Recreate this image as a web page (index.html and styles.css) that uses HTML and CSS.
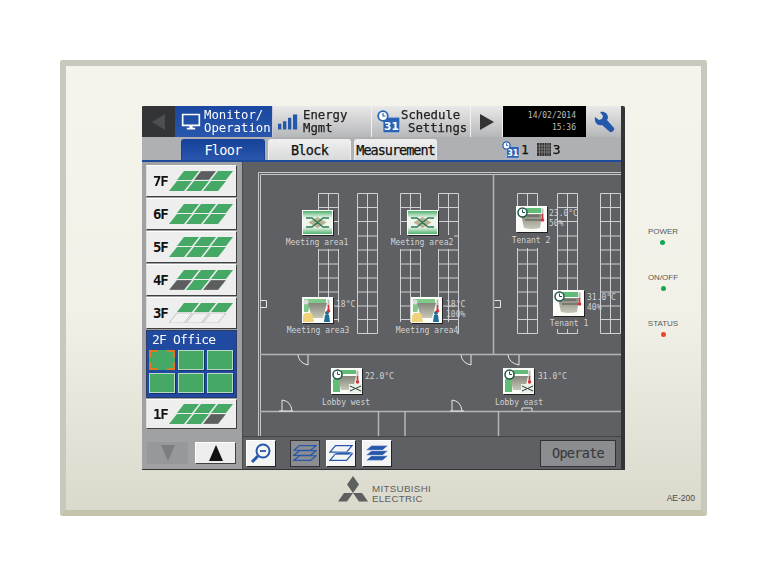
FILE: index.html
```html
<!DOCTYPE html>
<html lang="en">
<head>
<meta charset="utf-8">
<title>AE-200</title>
<link rel="stylesheet" href="styles.css">
</head>
<body>
<svg class="defs" width="0" height="0" aria-hidden="true">
  <defs>
    <linearGradient id="band" x1="0" y1="0" x2="0" y2="1">
      <stop offset="0" stop-color="#4fb26e"/><stop offset=".3" stop-color="#eef6ec"/><stop offset=".7" stop-color="#eef6ec"/><stop offset="1" stop-color="#4fb26e"/>
    </linearGradient>
    <linearGradient id="body" x1="0" y1="0" x2="0" y2="1">
      <stop offset="0" stop-color="#85867c"/><stop offset="1" stop-color="#c8c8b8"/>
    </linearGradient>
    <g id="win">
      <path class="win" d="M.5.5h20v140H.5zM10.5.5v140M.5 14.500h20M.5 28.500h20M.5 43h20M.5 57h20M.5 71h20M.5 85h20M.5 99h20M.5 113h20M.5 126.500h20"/>
    </g>
    <g id="clock">
      <circle cx="6.500" cy="6.500" r="4.500" fill="#fff" stroke="#20564a" stroke-width="1.500"/>
      <path d="M6.500 3.500v3h2.500" fill="none" stroke="#20564a"/>
    </g>
    <g id="thermo">
      <path d="M26.500 2.500v11" stroke="#bbb" stroke-width="2"/>
      <path d="M26.500 8v6" stroke="#d8343c" stroke-width="1.500"/>
      <circle cx="26.500" cy="14" r="1.800" fill="#d8343c"/>
    </g>
    <g id="lossnay">
      <rect class="plate" width="31" height="25"/>
      <rect x="1" y="1" width="29" height="23" fill="url(#band)"/>
      <path d="M15.500 7l9 5.500-9 5.500-9-5.500z" fill="#b8b292"/>
      <path d="M4 8h6l11 9h6M4 17h6l11-9h6" fill="none" stroke="#2c7a58" stroke-width="1.400"/>
    </g>
    <g id="tenant">
      <rect class="plate" width="31" height="26"/>
      <rect x="10" y="2" width="15" height="5" fill="#62bb76"/>
      <path d="M5 8h21l-2 14q-8 2-16 0z" fill="url(#body)"/>
      <path d="M11 10h12M9 14h16" stroke="#555" fill="none"/>
      <use href="#clock"/><use href="#thermo"/>
    </g>
    <g id="meeting">
      <rect class="plate" width="31" height="26"/>
      <path d="M2 2h22v4H9l-3 9H2z" fill="#7fc98b"/>
      <path d="M6 6h19l-4 15H10z" fill="url(#body)"/>
      <path d="M1 25V19l2-3h7l2 9z" fill="#f0d27c"/>
      <circle cx="4" cy="5" r="2.500" fill="#ddd"/>
      <circle cx="25" cy="16" r="2" fill="#1d6f96"/><path d="M22 25l1-7h4l1 7z" fill="#1d6f96"/>
      <use href="#thermo"/>
    </g>
    <g id="lobby">
      <rect class="plate" width="31" height="26"/>
      <path d="M2 12l2-4h6V2h15v4H12l-3 8v10H2z" fill="#62bb76"/>
      <path d="M7 8h18l-3 14H10z" fill="url(#body)"/>
      <use href="#clock"/><use href="#thermo"/>
      <rect x="18" y="16" width="13" height="9" fill="#e6f2e6"/>
      <path d="M19 18l11 5M19 23l11-5" stroke="#333"/>
    </g>
    <g id="cal">
      <rect x="5" y="6" width="14" height="13" fill="#2a63b4" stroke="#bcd" stroke-width=".7"/>
      <text class="cal-num" x="12" y="17">31</text>
      <circle cx="5" cy="5" r="4" fill="#fff" stroke="#2a63b4" stroke-width="1.500"/>
      <path d="M5 2.500V5h2" fill="none" stroke="#2a63b4"/>
    </g>
    <g id="tiles">
      <polygon points="8,9 15,0 30,0 23,9"/><polygon points="25,9 32,0 47,0 40,9"/><polygon points="42,9 49,0 64,0 57,9"/>
      <polygon points="0,20 8,10 23,10 15,20"/><polygon points="17,20 25,10 40,10 32,20"/><polygon points="34,20 42,10 57,10 49,20"/>
    </g>
  </defs>
</svg>

<main class="device">
  <section class="screen">
    <header class="topbar">
      <button class="nav nav-back"><svg class="arrow" viewBox="0 0 14 16"><path d="M13 0v16L0 8z"/></svg></button>
      <button class="nav nav-active nav-wide">
        <svg class="nav-ico nav-mon" viewBox="0 0 24 22"><path d="M2 2h20v13H2z" fill="none" stroke="#fff" stroke-width="2"/><path d="M10 15h4v3h3v2H7v-2h3z" fill="#fff"/></svg>
        <span class="nav-text">Monitor/<br>Operation</span>
      </button>
      <button class="nav nav-wide">
        <svg class="nav-ico" viewBox="0 0 24 18"><path d="M0 18V11h4v7zM6 18V8h4v10zM12 18V4h4v14zM18 18V0h5v18z" fill="#2557ab"/></svg>
        <span class="nav-text nav-dark">Energy<br>Mgmt</span>
      </button>
      <button class="nav nav-wide">
        <svg class="nav-ico nav-cal" viewBox="0 0 20 20"><use href="#cal"/></svg>
        <span class="nav-text nav-dark">Schedule<span class="indent">Settings</span></span>
      </button>
      <button class="nav nav-next"><svg class="arrow arrow-dark" viewBox="0 0 14 16"><path d="M0 0v16l14-8z"/></svg></button>
      <div class="clock"><span>14/02/2014</span><span>15:36</span></div>
      <button class="nav nav-tool">
        <svg class="tool" viewBox="0 0 22 22"><path d="M2 6l4 3 3-1 1-3-3-4c4-1 8 1 8 6l-1 2 7 8c1 2-2 5-4 4l-8-7c-4 1-8-2-7-8z" fill="#2557ab"/></svg>
      </button>
    </header>

    <nav class="tabs">
      <button class="tab tab-active">Floor</button>
      <button class="tab">Block</button>
      <button class="tab tab-narrow">Measurement</button>
      <div class="counts">
        <svg class="count-ico" viewBox="0 0 20 20"><use href="#cal"/></svg><span>1</span>
        <svg class="count-grid" viewBox="0 0 14 13"><rect width="14" height="13" fill="#333"/><path d="M2.500 0v13M5 0v13M7.500 0v13M10 0v13M12 0v13M0 3h14M0 6h14M0 9h14" stroke="#999" stroke-width=".6"/></svg><span>3</span>
      </div>
    </nav>

    <div class="main">
      <aside class="side">
        <div class="floors">
          <button class="floor"><b>7F</b><svg class="mini" viewBox="0 0 64 20"><use class="g" href="#tiles"/><polygon class="d" points="25,9 32,0 47,0 40,9"/></svg></button>
          <button class="floor"><b>6F</b><svg class="mini" viewBox="0 0 64 20"><use class="g" href="#tiles"/></svg></button>
          <button class="floor"><b>5F</b><svg class="mini" viewBox="0 0 64 20"><use class="g" href="#tiles"/></svg></button>
          <button class="floor"><b>4F</b><svg class="mini" viewBox="0 0 64 20"><use class="g" href="#tiles"/><polygon class="d" points="0,20 8,10 23,10 15,20"/><polygon class="d" points="34,20 42,10 57,10 49,20"/></svg></button>
          <button class="floor"><b>3F</b><svg class="mini" viewBox="0 0 64 20"><use class="g" href="#tiles"/><polygon class="e" points="0,20 8,10 23,10 15,20"/><polygon class="e" points="17,20 25,10 40,10 32,20"/><polygon class="e" points="34,20 42,10 57,10 49,20"/></svg></button>
          <div class="floor-open">
            <div class="floor-title">2F Office</div>
            <div class="cells">
              <div class="cell cell-sel"></div><div class="cell"></div><div class="cell"></div>
              <div class="cell"></div><div class="cell"></div><div class="cell"></div>
            </div>
          </div>
          <button class="floor floor-short"><b>1F</b><svg class="mini" viewBox="0 0 64 20"><use class="g" href="#tiles"/><polygon class="d" points="34,20 42,10 57,10 49,20"/></svg></button>
        </div>
        <div class="pager">
          <button class="page page-off"><svg viewBox="0 0 12 12" preserveAspectRatio="none"><path d="M0 0h12L6 12z"/></svg></button>
          <button class="page"><svg viewBox="0 0 12 12" preserveAspectRatio="none"><path d="M0 12h12L6 0z"/></svg></button>
        </div>
      </aside>

      <div class="content">
        <svg class="plan" viewBox="243 162 378 274">
          <path class="wall" d="M258.500 436V172.500H621M260.500 436V174.500H621"/>
          <path class="wall wall-b" d="M493.500 174v180M260 354.500h361M260 411.500h361M378.500 411v25M405 411v25M498.500 411v25"/>
          <use href="#win" x="318" y="193"/><use href="#win" x="357" y="193"/>
          <use href="#win" x="400" y="193"/><use href="#win" x="438" y="193"/>
          <use href="#win" x="517" y="193"/><use href="#win" x="557" y="193"/><use href="#win" x="600" y="193"/>
          <path class="door" d="M260.500 300.500h6v7h-6M494.500 300.500h6v7h-6"/>
          <path class="door" d="M298 355q1 8 10 10V355M461 355q1 8 10 10V355M508 355q1 8 11 10V355"/>
          <path class="door" d="M282 411v-11q9 1 10 11M279 411h14M452 411v-11q9 1 10 11M450 411h14M522 411v-3h10v3"/>

          <rect class="mask" x="286" y="235" width="63" height="14"/>
          <rect class="mask" x="391" y="235" width="63" height="14"/>
          <rect class="mask" x="286" y="322" width="63" height="13"/>
          <rect class="mask" x="395" y="322" width="62" height="13"/>
          <rect class="mask" x="512" y="232" width="38" height="16"/>
          <rect class="mask" x="550" y="316" width="38" height="13"/>

          <use href="#lossnay" x="302" y="210"/><use href="#lossnay" x="407" y="210"/>
          <use href="#meeting" x="302" y="297"/><use href="#meeting" x="411" y="297"/>
          <use href="#tenant" x="516" y="206"/><use href="#tenant" x="553" y="290"/>
          <use href="#lobby" x="331" y="368"/><use href="#lobby" x="503" y="368"/>

          <text class="lbl" x="317" y="245">Meeting area1</text>
          <text class="lbl" x="422" y="245">Meeting area2</text>
          <text class="lbl" x="318" y="333">Meeting area3</text>
          <text class="lbl" x="427" y="333">Meeting area4</text>
          <text class="lbl" x="531" y="243">Tenant 2</text>
          <text class="lbl" x="569" y="326">Tenant 1</text>
          <text class="lbl" x="346" y="405">Lobby west</text>
          <text class="lbl" x="519" y="405">Lobby east</text>
          <text class="val" x="336" y="307">18°C</text>
          <text class="val" x="446" y="307">18°C</text>
          <text class="val" x="446" y="317">100%</text>
          <text class="val" x="549" y="216">23.0°C</text>
          <text class="val" x="549" y="226">50%</text>
          <text class="val" x="587" y="300">31.0°C</text>
          <text class="val" x="587" y="310">40%</text>
          <text class="val" x="365" y="379">22.0°C</text>
          <text class="val" x="538" y="379">31.0°C</text>
        </svg>
        <div class="tools">
          <button class="tbtn tbtn-zoom">
            <svg viewBox="0 0 22 22"><circle cx="13" cy="9" r="6.500" fill="none" stroke="#2557ab" stroke-width="2"/><path d="M10 9h6" stroke="#2557ab" stroke-width="1.800"/><path d="M8 14l-6 6" stroke="#2557ab" stroke-width="3"/></svg>
          </button>
          <div class="layers">
            <button class="tbtn tbtn-on"><svg viewBox="0 0 26 18"><path class="ln" d="M7 1h18l-6 5H1zM7 6.500h18l-6 5H1zM7 12h18l-6 5H1z"/></svg></button>
            <button class="tbtn"><svg viewBox="0 0 26 18"><path class="ln" d="M7 1h18l-6 7H1zM7 10h18l-6 7H1z"/><path class="fl" d="M9 8h17l-5 3H4z"/></svg></button>
            <button class="tbtn"><svg viewBox="0 0 26 18"><path class="fl" d="M7 1h18l-6 5H1zM7 6.500h18l-6 5H1zM7 12h18l-6 5H1z"/></svg></button>
          </div>
          <button class="operate">Operate</button>
        </div>
      </div>
    </div>
  </section>

  <aside class="indicators">
    <div class="ind"><span>POWER</span><i class="led led-g"></i></div>
    <div class="ind"><span>ON/OFF</span><i class="led led-g"></i></div>
    <div class="ind"><span>STATUS</span><i class="led led-r"></i></div>
  </aside>

  <footer class="foot">
    <svg class="logo" viewBox="0 0 30 26"><path d="M15 0l6 8.500-6 8.500-6-8.500zM15 17H6L0 25.500h9zM15 17h9l6 8.500h-9z" fill="#5e5f5f"/></svg>
    <div class="brand"><div>MITSUBISHI</div><div>ELECTRIC</div></div>
    <div class="model">AE-200</div>
  </footer>
</main>
</body>
</html>
```

FILE: styles.css
```css
* { box-sizing: border-box; }
html, body { margin: 0; height: 100%; background: #fff; }
body { padding: 60px 0 0 60px; font-family: "DejaVu Sans Mono", monospace; }
.defs { position: absolute; }
button { font: inherit; margin: 0; padding: 0; border: 0; color: inherit; display: block; }

.device {
  width: 647px; height: 456px;
  border: 6px solid #c9c8bc; border-bottom-color: #c4c3ab; border-radius: 3px;
  background: linear-gradient(#f5f4ec 0, #f2f1e8 55%, #dad9cc 100%);
  padding: 40px 0 0 76px;
  display: grid; grid-template-columns: 483px 1fr; grid-template-rows: 364px auto;
}

/* screen */
.screen {
  background: #333436; padding: 0 4px 1px 0;
  display: flex; flex-direction: column;
  border-radius: 2px 2px 0 0; filter: blur(.3px);
  overflow: hidden;
}
.topbar { display: flex; height: 31px; background: #333; flex: none; }
.nav {
  height: 31px; display: flex; align-items: center;
  background: linear-gradient(#e9e9e9, #b6b7b9);
  border-right: 1px solid #f2f2f2;
}
.nav-back { width: 33px; background: #333436; justify-content: center; border: 0; }
.nav-wide { width: 99px; padding-left: 5px; }
.nav-active { width: 98px; padding-left: 6px; background: linear-gradient(#1a479f, #2a57ad); border-right: 1px solid #c5c9d8; }
.nav-next { width: 32px; justify-content: center; }
.nav-tool { width: 35px; justify-content: center; border: 0; }
.arrow { width: 14px; height: 16px; fill: #4d4e50; }
.arrow-dark { fill: #333; }
.nav-ico { width: 20px; height: 20px; margin: 0 5px 0 0; flex: none; }
.nav-mon { margin-right: 3px; }
.nav-cal { width: 24px; height: 24px; margin-right: 0; }
.nav-text { font-size: 12.300px; line-height: 13px; color: #fff; text-align: left; }
.nav-dark { color: #222; -webkit-text-stroke: .25px #222; }
.indent { display: block; margin-left: 7px; }
.clock {
  width: 83px; background: #000; color: #bdbdbd; font-size: 8px; line-height: 12px;
  display: flex; flex-direction: column; align-items: flex-end; justify-content: center;
  padding-right: 10px;
}
.tool { width: 22px; height: 22px; }

/* tabs */
.tabs {
  height: 25px; flex: none; display: flex; align-items: flex-end; gap: 3px;
  background: #aeb0b3; padding-left: 39px; border-bottom: 2px solid #1c4a9c;
}
.tab {
  width: 83px; height: 21px; font-size: 13.500px; letter-spacing: -.7px;
  background: linear-gradient(#efefef, #d8d9da); color: #111; -webkit-text-stroke: .25px #111;
  border: 1px solid #eee; border-bottom: 0; border-radius: 3px 3px 0 0;
}
.tab-active { background: linear-gradient(#16429a, #2a57ad); color: #fff; border-color: #16429a; -webkit-text-stroke: 0; width: 84px; }
.tab-narrow { letter-spacing: -1px; }
.counts {
  display: flex; align-items: center; margin-left: 62px; height: 21px;
  font-size: 13px; color: #111; -webkit-text-stroke: .25px #111;
}
.count-ico { width: 18px; height: 18px; margin-right: 1px; }
.count-grid { width: 14px; height: 13px; margin: 0 2px 0 8px; }

/* side column */
.main { flex: 1; display: flex; min-height: 0; }
.side { width: 101px; flex: none; background: #a0a1a3; border-right: 1px solid #4a4b4d; padding: 3px 4px 0 4px; display: flex; flex-direction: column; }
.floors { display: flex; flex-direction: column; gap: 1px; }
.floor {
  width: 91px; height: 32px; flex: none; display: flex; align-items: center;
  background: #eeeeee; border: 1px solid #3e3f41; border-top-color: #fff; border-left-color: #ddd;
  padding: 0 0 0 6px; color: #111; font-size: 14px;
}
.floor b { font-weight: 700; letter-spacing: -1.200px; width: 16px; text-align: left; }
.floor-short { height: 30px; }
.mini { width: 64px; height: 20px; flex: none; }
.g { fill: #45a865; }
.d { fill: #5c5d5f; stroke: #eeeeee; stroke-width: .3; }
.e { fill: #f1f1f1; stroke: #bbb; stroke-width: .7; }
.floor-open {
  width: 91px; height: 68px; flex: none; background: #1f4aa0; padding: 1px 2px 0 2px;
  border: 1px solid #2b3c6d;
}
.floor-title { color: #fff; font-size: 13px; line-height: 15px; padding-left: 3px; letter-spacing: -.8px; height: 18px; }
.cells { display: grid; grid-template-columns: repeat(3, 26px); grid-auto-rows: 20px; gap: 3px 3px; }
.cell { background: #45a865; border: 1px solid #b9d9c4; box-shadow: 1px 1px 0 #16306a; }
.cell-sel {
  background:
    linear-gradient(#e07a1f, #e07a1f) 0 0/8px 2px,
    linear-gradient(#e07a1f, #e07a1f) 0 0/2px 8px,
    linear-gradient(#e07a1f, #e07a1f) 100% 0/8px 2px,
    linear-gradient(#e07a1f, #e07a1f) 100% 0/2px 8px,
    linear-gradient(#e07a1f, #e07a1f) 0 100%/8px 2px,
    linear-gradient(#e07a1f, #e07a1f) 0 100%/2px 8px,
    linear-gradient(#e07a1f, #e07a1f) 100% 100%/8px 2px,
    linear-gradient(#e07a1f, #e07a1f) 100% 100%/2px 8px,
    #45a865;
  background-repeat: no-repeat; border: 0; box-shadow: none;
}
.pager { display: flex; gap: 7px; margin-top: 13px; padding-left: 1px; }
.page {
  width: 41px; height: 22px; background: #eeeeee; border: 1px solid #3e3f41; border-top-color: #fff; border-left-color: #fff;
  display: flex; align-items: center; justify-content: center;
}
.page svg { width: 14px; height: 16px; fill: #111; }
.page-off { background: #97989a; border-color: #97989a; }
.page-off svg { fill: #7c7d7f; }

/* plan */
.content { flex: 1; display: flex; flex-direction: column; background: #5f6063; }
.plan { display: block; width: 378px; height: 274px; flex: none; }
.wall { fill: none; stroke: #c6c7c8; stroke-width: 1; }
.wall-b { stroke-width: 1.500; stroke: #b4b5b6; }
.win { fill: none; stroke: #d0d1d2; stroke-width: 1; }
.door { fill: none; stroke: #e6e6e6; stroke-width: 1; }
.mask { fill: #5f6063; }
.plate { fill: #fbfbf8; filter: drop-shadow(1px 1px 0 #222); }
.lbl, .val { font-size: 8px; fill: #d2d3d4; font-family: "DejaVu Sans Mono", monospace; }
.lbl { text-anchor: middle; }
.cal-num { font-size: 9px; font-weight: 700; fill: #fff; text-anchor: middle; font-family: "DejaVu Sans", sans-serif; }

.tools { flex: 1; display: flex; align-items: center; padding: 0 5px 0 3px; border-top: 1px solid #444; }
.tbtn {
  width: 30px; height: 27px; background: #f4f4f4;
  border: 1px solid #222; border-top-color: #fff; border-left-color: #fff;
  display: flex; align-items: center; justify-content: center;
}
.tbtn svg { width: 24px; height: 20px; }
.tbtn-zoom svg { width: 22px; height: 22px; }
.tbtn-on { background: #8c8d90; border-color: #333; }
.layers { display: flex; gap: 6px; margin-left: 14px; }
.ln { fill: none; stroke: #2557ab; stroke-width: 1.300; }
.fl { fill: #2557ab; stroke: #f4f4f4; stroke-width: .5; }
.operate {
  margin-left: auto; width: 76px; height: 27px; background: #8c8d90;
  border: 1px solid #333; color: #3c3d3f; font-size: 13.500px; letter-spacing: -.7px; -webkit-text-stroke: .2px #3c3d3f;
}

/* indicators */
.indicators { display: flex; flex-direction: column; align-items: center; padding-top: 121px; width: 60px; margin-left: 8px; }
.ind { display: flex; flex-direction: column; align-items: center; height: 46px; font: 8px/10px "Liberation Sans", sans-serif; color: #5a5a58; }
.led { width: 5px; height: 5px; border-radius: 50%; margin-top: 3px; }
.led-g { background: #14a650; }
.led-r { background: #e8452c; }

/* footer */
.foot { grid-column: 1 / -1; display: flex; align-items: flex-start; padding: 6px 6px 0 196px; }
.logo { width: 30px; height: 26px; flex: none; }
.brand { margin: 8px 0 0 4px; font: 9.800px/9.500px "Liberation Sans", sans-serif; letter-spacing: .3px; color: #5e5f5f; }
.model { margin: 17px 0 0 auto; font: 8.500px/10px "Liberation Sans", sans-serif; color: #4a4a48; }
```
